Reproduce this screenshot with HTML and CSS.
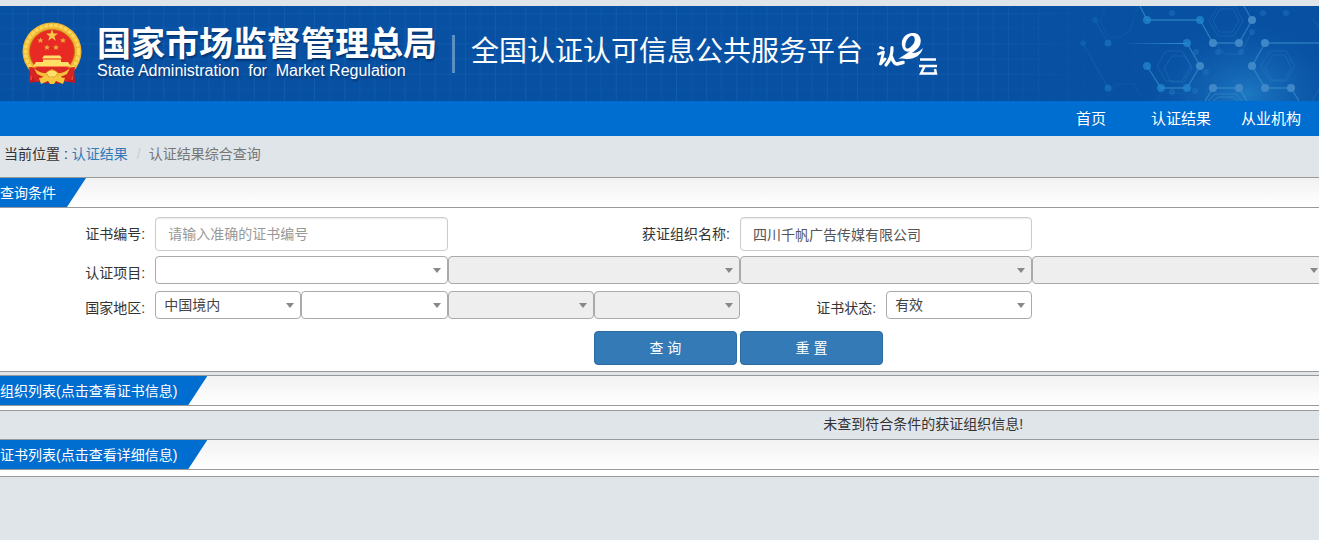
FILE: index.html
```
<!DOCTYPE html>
<html lang="zh-CN">
<head>
<meta charset="utf-8">
<title>认证结果综合查询</title>
<link rel="stylesheet" href="styles.css">
</head>
<body>
<header class="banner">
  <svg class="banner-grid" aria-hidden="true">
    <defs>
      <pattern id="grid" x="12.5" width="30.160" height="30.400" patternUnits="userSpaceOnUse">
        <path d="M0.5 0V31M0 7.5H31" stroke="#2272c4" stroke-opacity=".6"/>
        <path d="M15.5 0V31M0 22.5H31" stroke="#2272c4" stroke-opacity=".4"/>
      </pattern>
    </defs>
    <rect width="100%" height="100%" fill="url(#grid)"/>
  </svg>
  <svg class="banner-art" viewBox="0 0 279 95" aria-hidden="true">
    <defs>
      <radialGradient id="glow"><stop offset="0" stop-color="#2485cc" stop-opacity=".75"/><stop offset="1" stop-color="#1560b4" stop-opacity="0"/></radialGradient>
      <linearGradient id="fade"><stop offset="0" stop-color="#3190d0" stop-opacity="0"/><stop offset="1" stop-color="#3190d0"/></linearGradient>
    </defs>
    <ellipse cx="207" cy="88" rx="100" ry="72" fill="url(#glow)"/>
    <g fill="none" stroke="#3b8ccb" stroke-opacity=".28">
      <path d="M117 60L126 45H142L151 60L142 75H126ZM124 62L132 50H145L152 62L144 76H131Z"/>
      <path d="M169 15L178 0H195L203 15L194 30H178ZM173 15L180 3H193L199 15L192 26H179Z"/>
      <path d="M221 60L230 45H246L255 60L246 75H230ZM225 62L233 49H245L251 62L244 74H232Z"/>
      <path d="M60 15L66 0M98 0L90 25L80 31H68L60 15M68 90L76 78H94L101 90M116 95L121 87H145L150 95" stroke-opacity=".15"/>
      <path d="M168 95L175 88H196L202 95M173 95L178 91H193L198 95" stroke-opacity=".6"/>
      <path d="M212 26L200 48H184L175 36M272 95L279 83M279 22L273 13"/>
    </g>
    <g fill="none" stroke="#3b98cd" stroke-opacity=".6" stroke-width="1.3">
      <path d="M100 0L107 14H160L173 37H199L212 14L204 0"/>
      <path d="M147 37L160 60L147 82H121L107 60"/>
      <path d="M279 37H225L212 60L225 82H251L259 95M165 95L173 82H199L207 95"/>
    </g>
    <path d="M80 37H147V38H80Z" fill="url(#fade)"/>
    <path d="M43 37L68 82M55 14L68 37" stroke="#2475c2" stroke-opacity=".35" fill="none"/>
    <g fill="#2387cc" fill-opacity=".75">
      <circle cx="68" cy="37" r="3.5" opacity=".6"/><circle cx="68" cy="82" r="3.5" opacity=".6"/><circle cx="55" cy="14" r="3" opacity=".3"/><circle cx="43" cy="37" r="3" opacity=".3"/>
      <circle cx="107" cy="14" r="4"/><circle cx="160" cy="14" r="4"/><circle cx="147" cy="37" r="4"/><circle cx="107" cy="60" r="4"/><circle cx="121" cy="82" r="4"/><circle cx="147" cy="82" r="4"/>
    </g>
    <g fill="#4087c8">
      <circle cx="160" cy="60" r="4"/><circle cx="173" cy="37" r="4"/><circle cx="199" cy="37" r="4"/><circle cx="212" cy="14" r="4"/><circle cx="225" cy="37" r="4"/><circle cx="212" cy="60" r="4"/><circle cx="173" cy="82" r="4"/><circle cx="199" cy="82" r="4"/><circle cx="225" cy="82" r="4"/><circle cx="251" cy="82" r="4"/>
    </g>
    <g fill="#287ac2" fill-opacity=".4">
      <circle cx="156" cy="46" r="3"/><circle cx="178" cy="46" r="3"/><circle cx="201" cy="46" r="3"/><circle cx="212" cy="26" r="3"/><circle cx="166" cy="66" r="3"/><circle cx="155" cy="85" r="3"/><circle cx="132" cy="86" r="3"/><circle cx="223" cy="7" r="3"/><circle cx="246" cy="7" r="3"/><circle cx="132" cy="7" r="3"/>
    </g>
  </svg>
  <div class="brand">
    <svg class="emblem" viewBox="0 0 60 64" role="img" aria-label="国徽">
      <path d="M8 43L7 61L19 59L25 62L30 59L36 62L42 59L53 61L52 43Z" fill="#c31a1d"/>
      <path d="M10 47L9 58M15 52L14 59M51 47L50 58M45 52L46 59" stroke="#ed4d36" stroke-width="1.5"/>
      <ellipse cx="30" cy="29.500" rx="29.5" ry="29" fill="#efb330"/>
      <ellipse cx="30" cy="29.500" rx="26.500" ry="26" fill="none" stroke="#fbd555" stroke-width="3.500" stroke-dasharray="4 1"/>
      <ellipse cx="30" cy="29.500" rx="22.5" ry="22" fill="#e92a24" stroke="#bd7517" stroke-width=".8"/>
      <path d="M30 7L31.5 11.400H36L32.400 14.200L33.800 18.700L30 16L26.200 18.700L27.600 14.200L24 11.400H28.500Z" fill="#f7c84a"/>
      <path id="star" d="M18.500 15.500L19.300 17.500H21.500L19.800 18.900L20.400 21.100L18.500 19.800L16.600 21.100L17.200 18.900L15.500 17.500H17.700Z" fill="#e9ad3c"/>
      <use href="#star" x="22.500"/><use href="#star" x="6.500" y="7"/><use href="#star" x="15.500" y="7"/>
      <path d="M22 33.500H38L40 36.500H20ZM21 37.500H39V40H21ZM14 40H46L49 44.500H11Z" fill="#ffdf66"/>
      <path d="M9 45.500H51L45 51H15Z" fill="#dc2822"/>
      <path d="M7 45C13 45 15 51 22 53L17 60C11 59 8 53 7 45ZM53 45C47 45 45 51 38 53L43 60C49 59 52 53 53 45Z" fill="#d52421"/>
      <path d="M12 46Q18 52 25 51L30 47L35 51Q42 52 48 46L45 52Q37 57 30 53Q23 57 15 52Z" fill="#f4bd3a"/>
      <path d="M17 56L26 55L30 58L34 55L43 56L41 62L34 59L32 62H28L26 59L19 62Z" fill="#f8c63d"/>
      <path d="M24 51Q30 45 36 51L33 55H27Z" fill="#ffe06b" stroke="#d79a25" stroke-width=".8"/>
    </svg>
    <div class="agency">
      <div class="agency-cn">国家市场监督管理总局</div>
      <div class="agency-en">State Administration &nbsp;for &nbsp;Market Regulation</div>
    </div>
    <h1 class="platform">全国认证认可信息公共服务平台</h1>
    <svg class="cloud-logo" viewBox="0 0 62 44" role="img" aria-label="认e云">
      <g fill="none" stroke="#fff" stroke-linecap="round" stroke-linejoin="round">
        <path d="M3.500 15.500L6 16.500M1.500 22L6.500 20L3.500 32L8 27" stroke-width="2.800"/>
        <path d="M15 15.500Q15.500 25 9 33" stroke-width="3.200"/>
        <path d="M14.500 25Q17 32 20 32L26 30.500" stroke-width="3.600"/>
      </g>
      <path fill="#fff" fill-rule="evenodd" d="M27 18C22 11 26 1 36 1C45 1 46 12 40 17C38 19 36 20 35 21C40 21 43 19 46 16C44 23 38 27 31 27C27 27 24 26 21 27C25 24 30 22 33 19C31 20 29 20 27 18ZM29 16C31 18 35 14 37 11C39 7 37 3 34 4C30 5 27 13 29 16Z"/>
      <path d="M43 27.500H59M42 34H60M47.500 34.500L44 41.500H59L58 37" fill="none" stroke="#fff" stroke-width="2.400"/>
    </svg>
  </div>
</header>
<nav class="nav">
  <a href="#home">首页</a>
  <a href="#results">认证结果</a>
  <a href="#agencies">从业机构</a>
</nav>
<nav class="crumbs" aria-label="当前位置">
  <span>当前位置 :</span>
  <a href="#results">认证结果</a>
  <span class="slash">/</span>
  <span class="current">认证结果综合查询</span>
</nav>
<main class="content">
  <section class="panel query">
    <div class="panel-head"><h2 class="tab">查询条件</h2></div>
    <form class="form">
      <div class="row inputs">
        <label class="label" for="cert-no">证书编号:</label>
        <input class="text wide" id="cert-no" type="text" placeholder="请输入准确的证书编号">
        <label class="label wide" for="org">获证组织名称:</label>
        <input class="text wide" id="org" type="text" value="四川千帆广告传媒有限公司">
      </div>
      <div class="row">
        <label class="label" for="project">认证项目:</label>
        <div class="pick wide"><select id="project"><option></option></select></div>
        <div class="pick wide"><select aria-label="认证项目二级" disabled><option></option></select></div>
        <div class="pick wide"><select aria-label="认证项目三级" disabled><option></option></select></div>
        <div class="pick wide"><select aria-label="认证项目四级" disabled><option></option></select></div>
      </div>
      <div class="row">
        <label class="label" for="region">国家地区:</label>
        <div class="pick"><select id="region"><option>中国境内</option></select></div>
        <div class="pick"><select aria-label="省"><option></option></select></div>
        <div class="pick"><select aria-label="市" disabled><option></option></select></div>
        <div class="pick"><select aria-label="区县" disabled><option></option></select></div>
        <label class="label" for="status">证书状态:</label>
        <div class="pick"><select id="status"><option>有效</option></select></div>
      </div>
      <div class="row actions">
        <button class="btn first" type="button">查 询</button>
        <button class="btn" type="button">重 置</button>
      </div>
    </form>
  </section>
  <section class="panel">
    <div class="panel-head"><h2 class="tab">组织列表(点击查看证书信息)</h2></div>
    <p class="empty">未查到符合条件的获证组织信息!</p>
  </section>
  <section class="panel certs">
    <div class="panel-head"><h2 class="tab">证书列表(点击查看详细信息)</h2></div>
  </section>
</main>
</body>
</html>
```
FILE: styles.css
```
* { box-sizing: border-box; }
body {
  margin: 0;
  padding-top: 6px;
  overflow: hidden;
  background: #e0e5e9;
  color: #333;
  font: 14px/20px "Liberation Sans", "Noto Sans CJK SC", sans-serif;
}
a { text-decoration: none; }
.banner {
  position: relative;
  background: #0750a2;
  color: #fff;
}
.banner-grid {
  position: absolute;
  inset: 0;
  width: 100%;
  height: 100%;
  opacity: .6;
  mask-image: linear-gradient(to right, #000 75%, transparent 86%);
}
.banner-art { position: absolute; right: 0; top: 0; height: 100%; }
.brand {
  position: relative;
  display: flex;
  align-items: center;
  height: 95px;
  padding-left: 22px;
}
.emblem { width: 60px; height: 64px; }
.agency {
  padding: 0 15px 4px;
  white-space: nowrap;
  text-shadow: 1px 2px 2px #06356f;
}
.agency-cn { font-size: 34px; font-weight: 700; line-height: 38px; }
.agency-en { font-size: 16px; line-height: 16px; }
.platform {
  margin: 0;
  padding: 0 14px 4px 16px;
  border-left: 3px solid #5c8dc3;
  font-size: 28px;
  font-weight: 400;
  line-height: 34px;
  white-space: nowrap;
}
.cloud-logo { width: 62px; height: 44px; }
.nav {
  display: flex;
  justify-content: flex-end;
  padding-right: 3px;
  background: #006dd0;
}
.nav a {
  width: 90px;
  padding-top: 1px;
  color: #fff;
  font-size: 15px;
  line-height: 34px;
  text-align: center;
}
.crumbs { display: flex; gap: 4px; padding: 8px 4px 13px; }
.crumbs a { color: #337ab7; }
.slash { padding: 0 4px 0 5px; color: #ccc; }
.current { color: #777; }
.content { width: 140%; }
.panel { background: #fff; border-top: 1px solid #999; }
.query { margin-bottom: 3px; border-bottom: 1px solid #999; }
.panel-head {
  border-bottom: 1px solid #999;
  background: linear-gradient(#f2f2f2, #fff);
}
.tab {
  width: fit-content;
  margin: 0;
  padding: 1px 30px 0 0;
  background: #006dd0;
  clip-path: polygon(0 0, 100% 0, calc(100% - 19px) 100%, 0 100%);
  color: #fff;
  font-size: 14px;
  font-weight: 400;
  line-height: 28px;
}
.form {
  display: flex;
  flex-direction: column;
  width: 95%;
  margin-left: 9px;
  padding: 9px 0 6px;
}
.row {
  display: grid;
  grid-template-columns: repeat(12, 1fr);
  margin-bottom: 7px;
}
.row.inputs { margin-bottom: 5px; align-items: center; }
.wide { grid-column: span 2; }
.label { padding: 7px 10px 0 0; text-align: right; }
.inputs .label { padding-top: 0; }
.text {
  height: 34px;
  min-width: 0;
  padding: 6px 12px;
  border: 1px solid #ccc;
  border-radius: 4px;
  box-shadow: inset 0 1px 1px rgba(0, 0, 0, .08);
  color: #555;
  font: inherit;
}
.text::placeholder { color: #999; }
.pick { position: relative; }
.pick::after {
  content: "";
  position: absolute;
  top: 12px;
  right: 7px;
  border: 4px solid transparent;
  border-top: 5px solid #888;
  border-bottom: 0;
  pointer-events: none;
}
.pick select {
  display: block;
  width: 100%;
  height: 28px;
  padding: 0 20px 0 8px;
  border: 1px solid #aaa;
  border-radius: 4px;
  appearance: none;
  background: #fff;
  color: #444;
  font: inherit;
}
.pick select:disabled { background: #eee; opacity: 1; }
.row.actions { margin: 5px 0 0; }
.btn {
  height: 34px;
  margin-right: 3px;
  padding: 0;
  border: 1px solid #2e6da4;
  border-radius: 4px;
  background: #337ab7;
  color: #fff;
  font: inherit;
}
.first { grid-column-start: 5; }
.empty {
  margin: 4px 0 0;
  padding: 3px 0 5px;
  border-top: 1px solid #999;
  background: #e0e5e9;
  text-align: center;
}
.certs { padding-bottom: 6px; border-bottom: 1px solid #999; }
```
